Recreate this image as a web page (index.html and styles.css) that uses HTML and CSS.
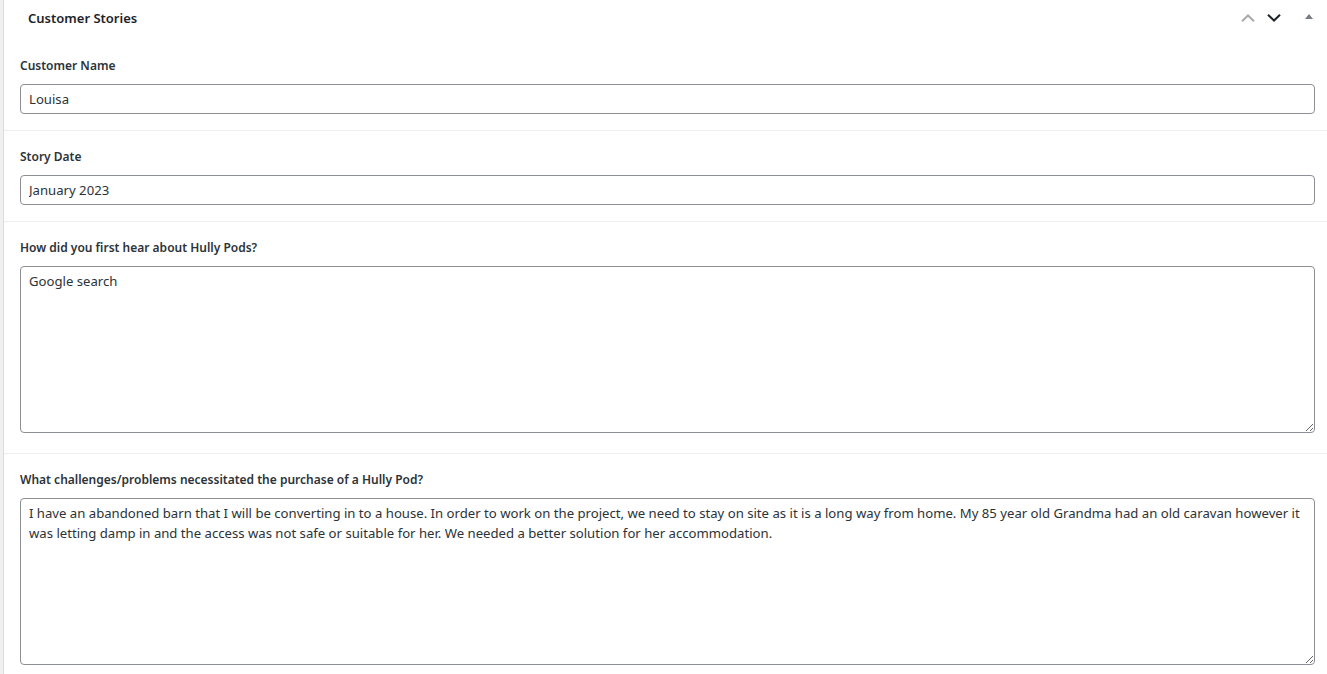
FILE: index.html
```html
<!DOCTYPE html>
<html lang="en">

<head>
    <meta charset="UTF-8">
    <meta name="viewport" content="width=device-width, initial-scale=1.0">
    <title>Customer Stories</title>
    <link rel="stylesheet" href="styles.css">
</head>

<body>
    <div class='postbox'>
        <div class='postbox_header'>
            <h2 class='hndle'>Customer Stories</h2>
            <div class='handle_actions'>
                <button class='handle_btn order_higher' type='button'>
                    <svg width='14' height='8' viewBox='0 0 14 8'><path d='M1 7.2 7 1.5l6 5.7' fill='none' stroke='#a7aaad' stroke-width='2'/></svg>
                </button>
                <button class='handle_btn order_lower' type='button'>
                    <svg width='14' height='8' viewBox='0 0 14 8'><path d='M1 .8 7 6.5 13 .8' fill='none' stroke='#1d2327' stroke-width='2'/></svg>
                </button>
                <button class='handle_btn toggle' type='button'>
                    <svg width='8' height='5' viewBox='0 0 8 5'><path d='M0 5 4 0l4 5z' fill='#787c82'/></svg>
                </button>
            </div>
        </div>

        <div class='acf_fields'>
            <div class='acf_field'>
                <label class='acf_label' for='customer_name'>Customer Name</label>
                <input class='acf_input' id='customer_name' type='text' value='Louisa'>
            </div>
            <div class='acf_field'>
                <label class='acf_label' for='story_date'>Story Date</label>
                <input class='acf_input' id='story_date' type='text' value='January 2023'>
            </div>
            <div class='acf_field'>
                <label class='acf_label' for='first_hear'>How did you first hear about Hully Pods?</label>
                <textarea class='acf_textarea' id='first_hear'>Google search</textarea>
            </div>
            <div class='acf_field'>
                <label class='acf_label' for='challenges'>What challenges/problems necessitated the purchase of a Hully Pod?</label>
                <textarea class='acf_textarea' id='challenges'>I have an abandoned barn that I will be converting in to a house. In order to work on the project, we need to stay on site as it is a long way from home. My 85 year old Grandma had an old caravan however it was letting damp in and the access was not safe or suitable for her. We needed a better solution for her accommodation.</textarea>
            </div>
        </div>
    </div>
</body>

</html>
```

FILE: styles.css
```css
body {
    margin: 0;
    padding-left: 3px;
    background: #f0f0f1;
    font-family: "Noto Sans", "Open Sans", sans-serif;
    color: #1d2327;
    overflow: hidden;
}

.postbox {
    background: #fff;
    border-left: 1px solid #dcdcde;
    min-height: 674px;
}

.postbox_header {
    height: 40px;
    display: flex;
    align-items: flex-start;
    justify-content: space-between;
}

.hndle {
    margin: 0;
    padding: 9px 0 0 24px;
    font-size: 13px;
    font-weight: 600;
    line-height: 18px;
    color: #1d2327;
}

.handle_actions {
    display: flex;
    align-items: center;
}

.handle_btn {
    background: none;
    border: 0;
    padding: 0;
    height: 36px;
    display: grid;
    place-items: center;
    cursor: pointer;
}

.order_higher,
.order_lower {
    width: 26px;
}

.order_higher {
    padding-bottom: 1px;
}

.toggle {
    width: 36px;
    margin-left: 4px;
    padding-bottom: 3px;
}

.acf_field {
    padding: 17px 12px 16px 16px;
    border-top: 1px solid #eeeeee;
}

.acf_field:first-child {
    border-top: 0;
}

.acf_label {
    display: block;
    font-size: 12px;
    font-weight: 600;
    line-height: 18px;
    margin-bottom: 9px;
    color: #2c3338;
}

.acf_input,
.acf_textarea {
    display: block;
    width: 100%;
    box-sizing: border-box;
    margin: 0;
    border: 1px solid #8c8f94;
    border-radius: 4px;
    font-family: inherit;
    font-size: 13.15px;
    color: #2c3338;
    background: #fff;
}

.acf_input {
    height: 30px;
    padding: 0 8px;
    line-height: 28px;
}

.acf_textarea {
    height: 167px;
    padding: 4px 8px;
    line-height: 20px;
    resize: vertical;
    margin-bottom: 4px;
}
```
